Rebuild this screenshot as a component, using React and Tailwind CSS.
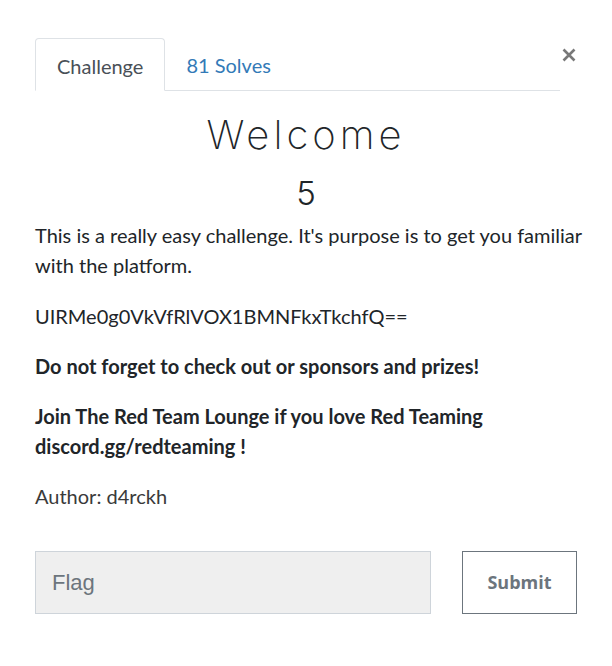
export default function App() {
  return (
    <div className="relative w-[612px] h-[666px] bg-white px-[35px] pt-[38px]" style={{ fontFamily: "Lato, 'Noto Sans', sans-serif" }}>
      <button className="absolute left-[560px] top-[43px] w-[17px] h-[24px] flex items-center justify-center text-[#7b7b7b]" aria-label="Close">
        <svg width="14" height="14" viewBox="0 0 14 14">
          <path d="M1.5 1.5 L12.5 12.5 M12.5 1.5 L1.5 12.5" stroke="#787878" strokeWidth="2.6" strokeLinecap="butt" />
        </svg>
      </button>
      <div className="flex border-b border-[#dee2e6] mr-[17px]">
        <div className="-mb-px border border-[#dee2e6] border-b-white rounded-t-[4px] bg-white h-[53px] px-[21px] pt-[2px] flex items-center text-[20px] text-[#495057]">
          Challenge
        </div>
        <div className="h-[52px] px-[21px] pt-[2px] flex items-center text-[20px] text-[#337ab7]">
          81 Solves
        </div>
      </div>
      <h3 className="text-center text-[40px] leading-[52px] mt-[18px] font-extralight tracking-[4px] text-[#212529]" style={{ fontFamily: "Inter, sans-serif" }}>
        Welcome
      </h3>
      <h4 className="text-center text-[33px] leading-[40px] mt-[12px] font-light text-[#212529]" style={{ fontFamily: "Inter, sans-serif" }}>
        5
      </h4>
      <div className="text-[20px] leading-[30px] text-[#212529] mt-[7px] -mr-[12px]">
        <p className="mb-[21px]">This is a really easy challenge. It's purpose is to get you familiar with the platform.</p>
        <p className="mb-[20px]">UIRMe0g0VkVfRlVOX1BMNFkxTkchfQ==</p>
        <p className="mb-[20px] font-bold">Do not forget to check out or sponsors and prizes!</p>
        <p className="mb-[20px] font-bold">Join The Red Team Lounge if you love Red Teaming<br />discord.gg/redteaming !</p>
        <p className="text-[#3a3a3a]">Author: d4rckh</p>
      </div>
      <div className="flex mt-[40px] gap-[31px]">
        <div className="w-[396px] h-[63px] bg-[#efefef] border border-[#ced4da] flex items-center pl-[16px] text-[22px] text-[#6c757d]" style={{ fontFamily: "'Liberation Sans', Arial, sans-serif" }}>
          Flag
        </div>
        <button className="w-[115px] h-[63px] border border-[#6c757d] bg-white text-[18px] font-bold text-[#6c757d]" style={{ fontFamily: "'Open Sans', sans-serif" }}>
          Submit
        </button>
      </div>
    </div>
  );
}
